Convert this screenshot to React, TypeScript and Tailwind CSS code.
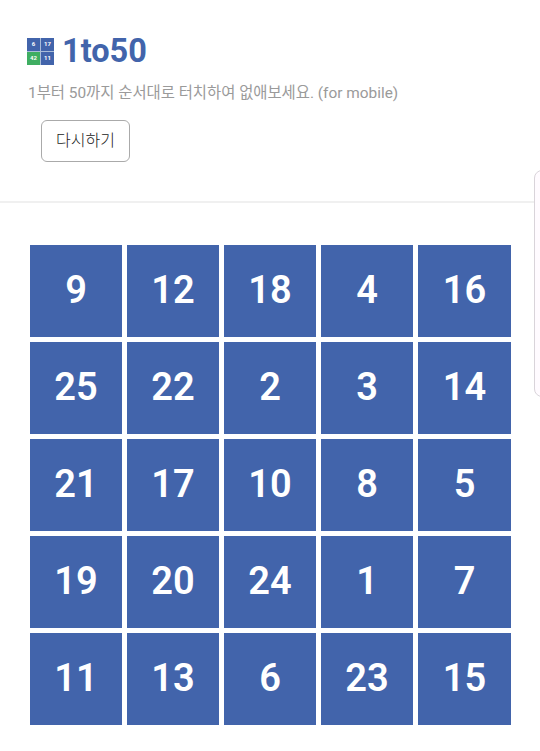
const rows = [
  [9, 12, 18, 4, 16],
  [25, 22, 2, 3, 14],
  [21, 17, 10, 8, 5],
  [19, 20, 24, 1, 7],
  [11, 13, 6, 23, 15],
];

function Logo() {
  return (
    <div className="grid grid-cols-2 gap-px w-[27px] h-[27px] bg-[#a9bcd8] text-[6px] leading-none font-bold text-white">
      <div className="flex items-center justify-center bg-[#4264ab]">6</div>
      <div className="flex items-center justify-center bg-[#4264ab]">17</div>
      <div className="flex items-center justify-center bg-[#3fae62]">42</div>
      <div className="flex items-center justify-center bg-[#4264ab]">11</div>
    </div>
  );
}

export default function App() {
  return (
    <div className="relative w-[540px] h-[751px] overflow-hidden bg-white font-['Roboto','Noto_Sans_CJK_KR',sans-serif]">
      {/* HEADER */}
      <div className="h-[203px] border-b-2 border-[#f0f0f0] pt-[32px]">
        <div className="flex items-center gap-[9px] pl-[27px]">
          <Logo />
          <h1 className="text-[32.5px] leading-[38px] font-bold text-[#4264ab] -ml-px">1to50</h1>
        </div>
        <p className="mt-[12px] pl-[28px] text-[15.4px] leading-[22px] text-[#9a9a9a]">
          1부터 50까지 순서대로 터치하여 없애보세요. (for mobile)
        </p>
        <button className="ml-[41px] mt-[16px] w-[89px] h-[42px] rounded-md border border-[#aaaaaa] bg-white text-[16px] font-light text-[#222222]">
          다시하기
        </button>
      </div>

      {/* BOARD */}
      <div className="mt-[42px] ml-[30px] flex flex-col gap-[5px]">
        {rows.map((row, i) => (
          <div key={i} className="flex gap-[5px]">
            {row.map((n, j) => (
              <div
                key={n}
                className={
                  j === 4
                    ? "flex items-center justify-center w-[93px] h-[92px] pb-[2px] bg-[#4264ab] text-white text-[38px] font-semibold"
                    : "flex items-center justify-center w-[92px] h-[92px] pb-[2px] bg-[#4264ab] text-white text-[38px] font-semibold"
                }
              >
                {n}
              </div>
            ))}
          </div>
        ))}
      </div>

      {/* side drawer edge */}
      <div className="absolute left-[534px] top-[170px] w-[20px] h-[227px] rounded-l-lg border border-[#d9d4da] bg-[#fffbff]" />
    </div>
  );
}
